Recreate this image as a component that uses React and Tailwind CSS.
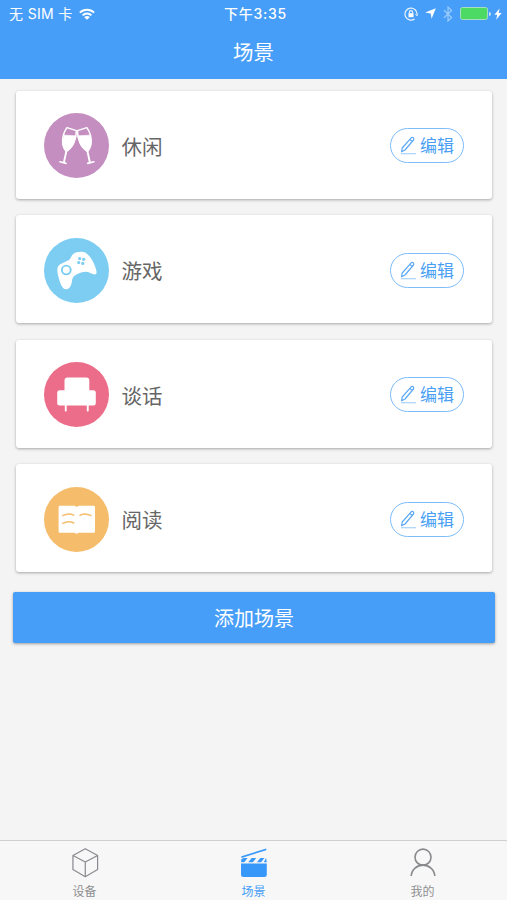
function GlassesIcon() {
  return (
    <svg viewBox="0 0 65 65" className="size-full" fill="none" stroke="#fff" strokeLinecap="round" strokeLinejoin="round">
      <Glass />
      <g transform="translate(65.8 0) scale(-1 1)">
        <Glass />
      </g>
    </svg>
  )
}

function Glass() {
  return (
    <>
      <path d="M23 14.6 L32.4 17.6 C32.4 26 29 34.5 22.2 38.5 C16.6 31.5 18 21.5 23 14.6Z" strokeWidth="1.5" />
      <path d="M20.6 22.2 L31.8 22.8 C30.8 30 28 35.5 22.2 38.5 C17.6 33.5 17.8 27.5 20.6 22.2Z" fill="#fff" strokeWidth="0.6" />
      <path d="M22.4 38 L20 49" strokeWidth="1.9" />
      <path d="M16 48.8 L22 50.4" strokeWidth="1.7" />
    </>
  )
}

function GamepadIcon() {
  return (
    <svg viewBox="0 0 65 65" className="size-full">
      <path
        fill="#fff"
        d="M13.3 31.8 C13.3 28.8 14.6 27.2 17.3 25.8 L25 21.9 C27 20.8 27.2 17.2 29.8 15.4 C32 14 38.5 12.9 41.5 14.8 C45.5 17.2 48.6 22.3 50 25.8 C51.6 29.6 53.4 34.6 52.2 35.8 C50.4 37.4 48 35.6 45.4 34.4 C41.6 32.6 36.6 34.4 33 36.2 C29.6 38 28.4 39.4 27.9 43.4 C27.4 47.6 25.4 51.2 21.8 51.2 C18.6 51.2 16.8 46.6 15.3 42 C14.3 38.6 13.3 35 13.3 31.8Z"
      />
      <circle cx="22.3" cy="32" r="4.4" fill="none" stroke="#7dcdf3" strokeWidth="1.9" />
      <g fill="#7dcdf3">
        <circle cx="35.6" cy="20.6" r="1.6" />
        <circle cx="39.7" cy="21.3" r="1.6" />
        <circle cx="34.7" cy="24.6" r="1.6" />
        <circle cx="38.8" cy="25.4" r="1.6" />
      </g>
    </svg>
  )
}

function SofaIcon() {
  return (
    <svg viewBox="0 0 65 65" className="size-full" fill="#fff">
      <path d="M23.5 15.5 H42.3 A3 3 0 0 1 45.3 18.5 V28.3 H49.3 A2.5 2.5 0 0 1 51.8 30.8 V41 A2.5 2.5 0 0 1 49.3 43.5 H15.7 A2.5 2.5 0 0 1 13.2 41 V30.8 A2.5 2.5 0 0 1 15.7 28.3 H20.5 V18.5 A3 3 0 0 1 23.5 15.5Z" />
      <rect x="20.8" y="42" width="1.9" height="7.6" rx="0.8" />
      <rect x="42.8" y="42" width="1.9" height="7.6" rx="0.8" />
    </svg>
  )
}

function BookIcon() {
  return (
    <svg viewBox="0 0 65 65" className="size-full">
      <path
        fill="#fff"
        d="M16 18.7 H29.2 C30.8 18.7 31.8 19.1 32.7 20 C33.6 19.1 34.6 18.7 36.2 18.7 H49.6 Q51 18.7 51 20.1 V44.4 Q51 45.8 49.6 45.8 H36.2 C34.6 45.8 33.6 46.2 32.7 47 C31.8 46.2 30.8 45.8 29.2 45.8 H16 Q14.6 45.8 14.6 44.4 V20.1 Q14.6 18.7 16 18.7Z"
      />
      <g fill="none" stroke="#f5bd6b" strokeWidth="1.5" strokeLinecap="round">
        <path d="M18.8 28.6 Q24.5 25.6 29.8 28.2" />
        <path d="M36 28.2 Q41.5 25.6 47 28.6" />
        <path d="M18.8 36.4 Q24.5 33.4 29.8 36" />
      </g>
    </svg>
  )
}

function PencilIcon() {
  return (
    <svg viewBox="0 0 17 19" className="h-[19px] w-[17px]" fill="none" stroke="#5aa8f5" strokeLinejoin="round">
      <path d="M1.6 15.8 L2.2 12 L11.2 1.8 Q12.3 0.9 13.3 1.8 Q14.3 2.8 13.5 4 L5 14Z M9.8 3.4 L12.1 5.5" strokeWidth="1.2" />
      <path d="M1 17.7 H16" stroke="#a9d3fb" strokeWidth="1.2" />
    </svg>
  )
}

const scenes = [
  { name: '休闲', color: 'bg-[#c48fc0]', Icon: GlassesIcon },
  { name: '游戏', color: 'bg-[#7dcdf3]', Icon: GamepadIcon },
  { name: '谈话', color: 'bg-[#ec6d89]', Icon: SofaIcon },
  { name: '阅读', color: 'bg-[#f5bd6b]', Icon: BookIcon },
]

function StatusBar() {
  return (
    <div className="grid h-[27px] grid-cols-3 items-center pr-[5px] pl-[9px] text-white">
      <div className="flex items-center">
        <span className="text-[14px] tracking-[0.35px]">无 SIM 卡</span>
        <svg viewBox="0 0 16 12" className="ml-[6px] h-3 w-4" fill="none" stroke="#fff" strokeWidth="2">
          <path d="M0.9 4.6 A10 10 0 0 1 15.1 4.6" />
          <path d="M3.6 7.4 A6.3 6.3 0 0 1 12.4 7.4" />
          <path d="M8 11.8 L5.2 9.2 A3.8 3.8 0 0 1 10.8 9.2Z" fill="#fff" stroke="none" />
        </svg>
      </div>
      <span className="text-center text-[14px] font-medium tracking-[0.75px] whitespace-nowrap">下午3:35</span>
      <div className="flex items-center justify-end">
        <svg viewBox="0 0 14 14" className="size-[14px]" fill="none" stroke="#e6f2ff" strokeWidth="1.2">
          <path d="M10.6 11.9 A6 6 0 1 1 13 7.6" />
          <path d="M11.4 7 L13 9 L14 6.8" strokeWidth="0.8" />
          <rect x="4.5" y="6.2" width="5" height="4" fill="#fff" stroke="none" />
          <path d="M5.4 6.6 V5.2 A1.6 1.6 0 0 1 8.6 5.2 V6.6" />
        </svg>
        <svg viewBox="0 0 12 12" className="ml-[7px] size-[11px]" fill="#fff">
          <path d="M11.8 0.2 L7.2 11.8 L6.2 6 L0.2 5Z" />
        </svg>
        <svg viewBox="0 0 10 16" className="ml-[7px] h-4 w-[10px]" fill="none" stroke="#9bccfc" strokeWidth="1.2">
          <path d="M1 4.2 L8.6 11.6 L5 15 V1 L8.6 4.4 L1 11.8" />
        </svg>
        <span className="ml-[7px] h-[13px] w-[28px] rounded-[2.5px] border border-[#a5dfc0] bg-[#4cd964]" />
        <span className="ml-px h-1 w-[1.5px] rounded-r bg-[#c3e0fc]" />
        <svg viewBox="0 0 8 12" className="ml-[3px] h-[12px] w-[8px]" fill="#fff">
          <path d="M5.6 0.4 L0.4 6.8 H3.2 L2.2 11.8 L7.6 5 H4.7Z" />
        </svg>
      </div>
    </div>
  )
}

function SceneCard({ scene }) {
  const { name, color, Icon } = scene
  return (
    <div className="flex h-[108px] items-center rounded-[3px] bg-white px-[28px] pt-[2.5px] shadow-[0_1px_3px_rgba(0,0,0,0.32)]">
      <div className={`size-[65px] shrink-0 rounded-full ${color}`}>
        <Icon />
      </div>
      <span className="ml-[12.5px] pt-[4px] text-[20.5px] leading-none text-[#666]">{name}</span>
      <button
        type="button"
        className="ml-auto flex h-[35px] w-[74px] items-center justify-center rounded-full border-[1.5px] border-[#7cbcf9] text-[17px] leading-none text-[#4a9ff5]"
      >
        <PencilIcon />
        <span className="ml-[3px] pt-[2px]">编辑</span>
      </button>
    </div>
  )
}

function TabItem({ label, active, children }) {
  return (
    <div className="flex flex-1 flex-col items-center pt-[6px]">
      {children}
      <span className={`mt-[5px] text-[12px] leading-[16px] ${active ? 'text-[#459df7]' : 'text-[#8f8f92]'}`}>{label}</span>
    </div>
  )
}

function TabBar() {
  return (
    <nav className="mt-auto flex h-[60px] border-t border-[#d0d0d0] bg-[#f7f7f7]">
      <TabItem label="设备">
        <svg viewBox="0 0 32 34" className="h-[34px] w-8" fill="none" stroke="#8a8a90" strokeWidth="1.3" strokeLinejoin="round">
          <path d="M16.3 1.8 L29.4 9 V24 L16.3 31.6 L3.2 24 V9Z" />
          <path d="M3.2 9 L16.3 16 L29.4 9 M16.3 16 V31.6" />
        </svg>
      </TabItem>
      <TabItem label="场景" active>
        <svg viewBox="0 0 32 34" className="h-[34px] w-8" fill="#3898fa">
          <path d="M2.6 9.8 L29 1.6 V3.4 L2.6 11.6Z" />
          <path d="M4.6 11.6 H9.2 L5.6 16.2 H2.4 V13.4Z M13.6 11.6 H18.4 L14.8 16.2 H9.8Z M22.8 11.6 H27 L23.6 16.2 H19Z M28.8 11.6 L29.6 16.2 H26.4Z" />
          <path d="M2.2 17.4 H29.6 V29.4 Q29.6 31.8 27.2 31.8 H4.6 Q2.2 31.8 2.2 29.4Z" />
        </svg>
      </TabItem>
      <TabItem label="我的">
        <svg viewBox="0 0 32 34" className="h-[34px] w-8" fill="none" stroke="#88898c" strokeWidth="1.7">
          <circle cx="16" cy="10.8" r="8.5" />
          <path d="M3.4 30.8 C4 23.6 9.6 19.3 16 19.3 C22.4 19.3 28 23.6 28.6 30.8" />
        </svg>
      </TabItem>
    </nav>
  )
}

export default function App() {
  return (
    <div className="flex h-[900px] w-full flex-col overflow-hidden bg-[#f4f4f4] font-['Inter','Noto_Sans_CJK_SC',sans-serif]">
      <header className="h-[79px] shrink-0 bg-[#479ef8]">
        <StatusBar />
        <h1 className="pt-[11px] text-center text-[20.5px] leading-[30px] text-white">场景</h1>
      </header>

      <main className="flex flex-col pt-[11.5px]">
        <div className="flex flex-col gap-[16.5px] pr-[15px] pl-4">
          {scenes.map((scene) => (
            <SceneCard key={scene.name} scene={scene} />
          ))}
        </div>
        <button
          type="button"
          className="mx-[13px] mr-[12px] mt-[20px] h-[51px] rounded-[2px] bg-[#479ef8] pt-[2px] text-[20px] leading-none text-white shadow-[0_1px_3px_rgba(0,0,0,0.35)]"
        >
          添加场景
        </button>
      </main>

      <TabBar />
    </div>
  )
}
